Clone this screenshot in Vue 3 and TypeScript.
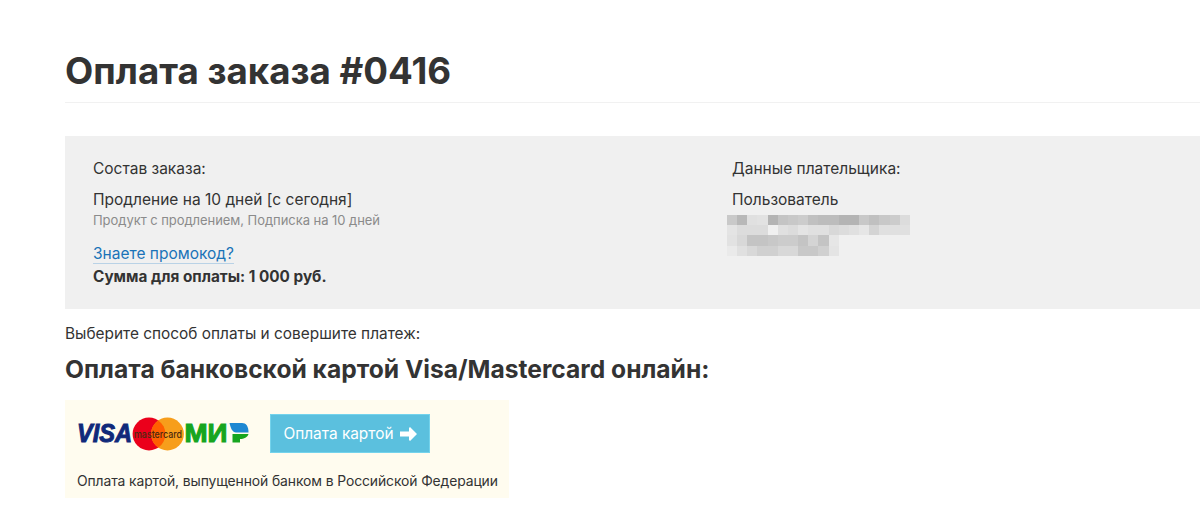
<script setup lang="ts">
const rows: string[][] = [
  ['c9','b8','e0','e2','b4','c4','c8','cc','c0','bc','bc','b4','b4','c8','c0','c8','cc','dc'],
  ['e4','dc','dc','dc','f0','e0','dc','e4','e0','e0','d8','dc','e0','e6','d4','e0','e0','e0'],
  ['e2','d8','c4','c4','c8','cc','cc','c4','d4','c4','e6'],
  ['ea','e0','d8','d0','d0','d8','d8','c8','c8','d0','e4'],
]
</script>

<template>
  <div class="page">
    <h1 class="title">Оплата заказа #0416</h1>
    <section class="summary">
      <div class="col-order">
        <div class="label">Состав заказа:</div>
        <div class="product">Продление на 10 дней [с сегодня]</div>
        <div class="note">Продукт с продлением, Подписка на 10 дней</div>
        <a class="promo" href="#">Знаете промокод?</a>
        <div class="total">Сумма для оплаты: 1 000 руб.</div>
      </div>
      <div class="col-payer">
        <div class="label">Данные плательщика:</div>
        <div class="product">Пользователь</div>
        <div class="mosaic">
          <div v-for="(row, r) in rows" :key="r" class="mosaic-row">
            <span v-for="(c, i) in row" :key="i" class="cell" :style="{ background: '#' + c + c + c }"></span>
          </div>
        </div>
      </div>
    </section>
    <p class="choose">Выберите способ оплаты и совершите платеж:</p>
    <h2 class="method">Оплата банковской картой Visa/Mastercard онлайн:</h2>
    <div class="pay-card">
      <div class="pay-row">
        <svg class="logos" width="172" height="34" viewBox="0 0 172 34">
          <text x="0" y="25" class="visa" textLength="55" lengthAdjust="spacingAndGlyphs">VISA</text>
          <circle cx="72" cy="17" r="16.4" fill="#eb001b" />
          <circle cx="90.5" cy="17" r="16.4" fill="#f79e1b" />
          <path d="M81.25 3.460A16.4 16.4 0 0 1 81.25 30.540A16.4 16.4 0 0 1 81.25 3.460z" fill="#ff5f00" />
          <text x="57" y="20.500" class="mc" textLength="48" lengthAdjust="spacingAndGlyphs">mastercard</text>
          <text x="107.500" y="25" class="mir" textLength="43" lengthAdjust="spacingAndGlyphs">МИ</text>
          <path d="M152.500 6H165C169 6 171.500 9 171.500 15.500H159C155.500 15.500 153.500 11 152.500 6z" fill="#1e88d2" />
          <path d="M155.500 17H171.500C170.500 20.500 167 22 163 22V25.500H155.500z" fill="#17a51f" />
        </svg>
        <button class="pay-btn" type="button">
          Оплата картой
          <svg class="arrow" width="17" height="14" viewBox="0 0 17 14"><path d="M0 4.500h9V1l1-1 7 7-7 7-1-1V9.500H0z" fill="#fff" /></svg>
        </button>
      </div>
      <div class="pay-note">Оплата картой, выпущенной банком в Российской Федерации</div>
    </div>
  </div>
</template>

<style>
html, body { margin: 0; background: #fff; overflow: hidden; }
</style>

<style scoped>
.page {
  height: 531px;
  overflow: hidden;
  padding-left: 65px;
  font-family: Inter, "Noto Sans", sans-serif;
  color: #333;
}
.title {
  margin: 0;
  padding-top: 47px;
  height: 55px;
  line-height: 48px;
  font-size: 36.7px;
  font-weight: 700;
  color: #333;
  border-bottom: 1px solid #f1f1f1;
}
.summary {
  margin-top: 33px;
  height: 173px;
  background: #f0f0f0;
  padding-left: 28px;
  display: grid;
  grid-template-columns: 639px 1fr;
}
.col-order, .col-payer { padding-top: 23px; }
.label { font-size: 15.5px; line-height: 20px; }
.product { margin-top: 11px; font-size: 15.5px; line-height: 20px; }
.note { font-size: 13px; line-height: 20px; color: #8b8b8b; letter-spacing: -0.05px; }
.promo {
  display: inline-block;
  margin-top: 14px;
  font-size: 15.5px;
  line-height: 19px;
  color: #1a73b8;
  text-decoration: none;
  border-bottom: 1px solid #b9d2e6;
}
.total { margin-top: 3px; font-size: 15.3px; line-height: 20px; font-weight: 700; color: #333; }
.mosaic { margin: 5px 0 0 -5px; }
.mosaic-row { display: flex; height: 10.2px; }
.cell { width: 10.17px; height: 10.2px; flex: none; }
.choose {
  margin: 15px 0 0;
  font-size: 15.4px;
  line-height: 20px;
}
.method {
  margin: 10px 0 0;
  font-size: 24.6px;
  line-height: 30px;
  font-weight: 700;
  color: #333;
}
.pay-card {
  margin-top: 16px;
  width: 444px;
  height: 98px;
  background: #fffcef;
  box-sizing: border-box;
  padding: 14px 0 0 12px;
}
.pay-row { display: flex; align-items: flex-start; gap: 21px; }
.logos { display: block; flex: none; margin-top: 3px; }
.visa { font: italic 700 25px "Liberation Sans", sans-serif; fill: #10297a; stroke: #10297a; stroke-width: 1px; }
.mc { font: 500 10px Inter, sans-serif; fill: #4a2a10; }
.mir { font: 700 26.5px "Liberation Sans", sans-serif; fill: #17a51f; stroke: #17a51f; stroke-width: 1.1px; }
.pay-btn {
  width: 160px;
  height: 39px;
  box-sizing: border-box;
  background: #5bc0de;
  border: 1px solid #74d3ec;
  color: #fff;
  font-family: Inter, sans-serif;
  font-size: 15.4px;
  padding: 0;
  display: flex;
  align-items: center;
  justify-content: center;
  gap: 6px;
}
.pay-note { margin-top: 18px; font-size: 13.9px; line-height: 20px; letter-spacing: -0.1px; white-space: nowrap; }
</style>
